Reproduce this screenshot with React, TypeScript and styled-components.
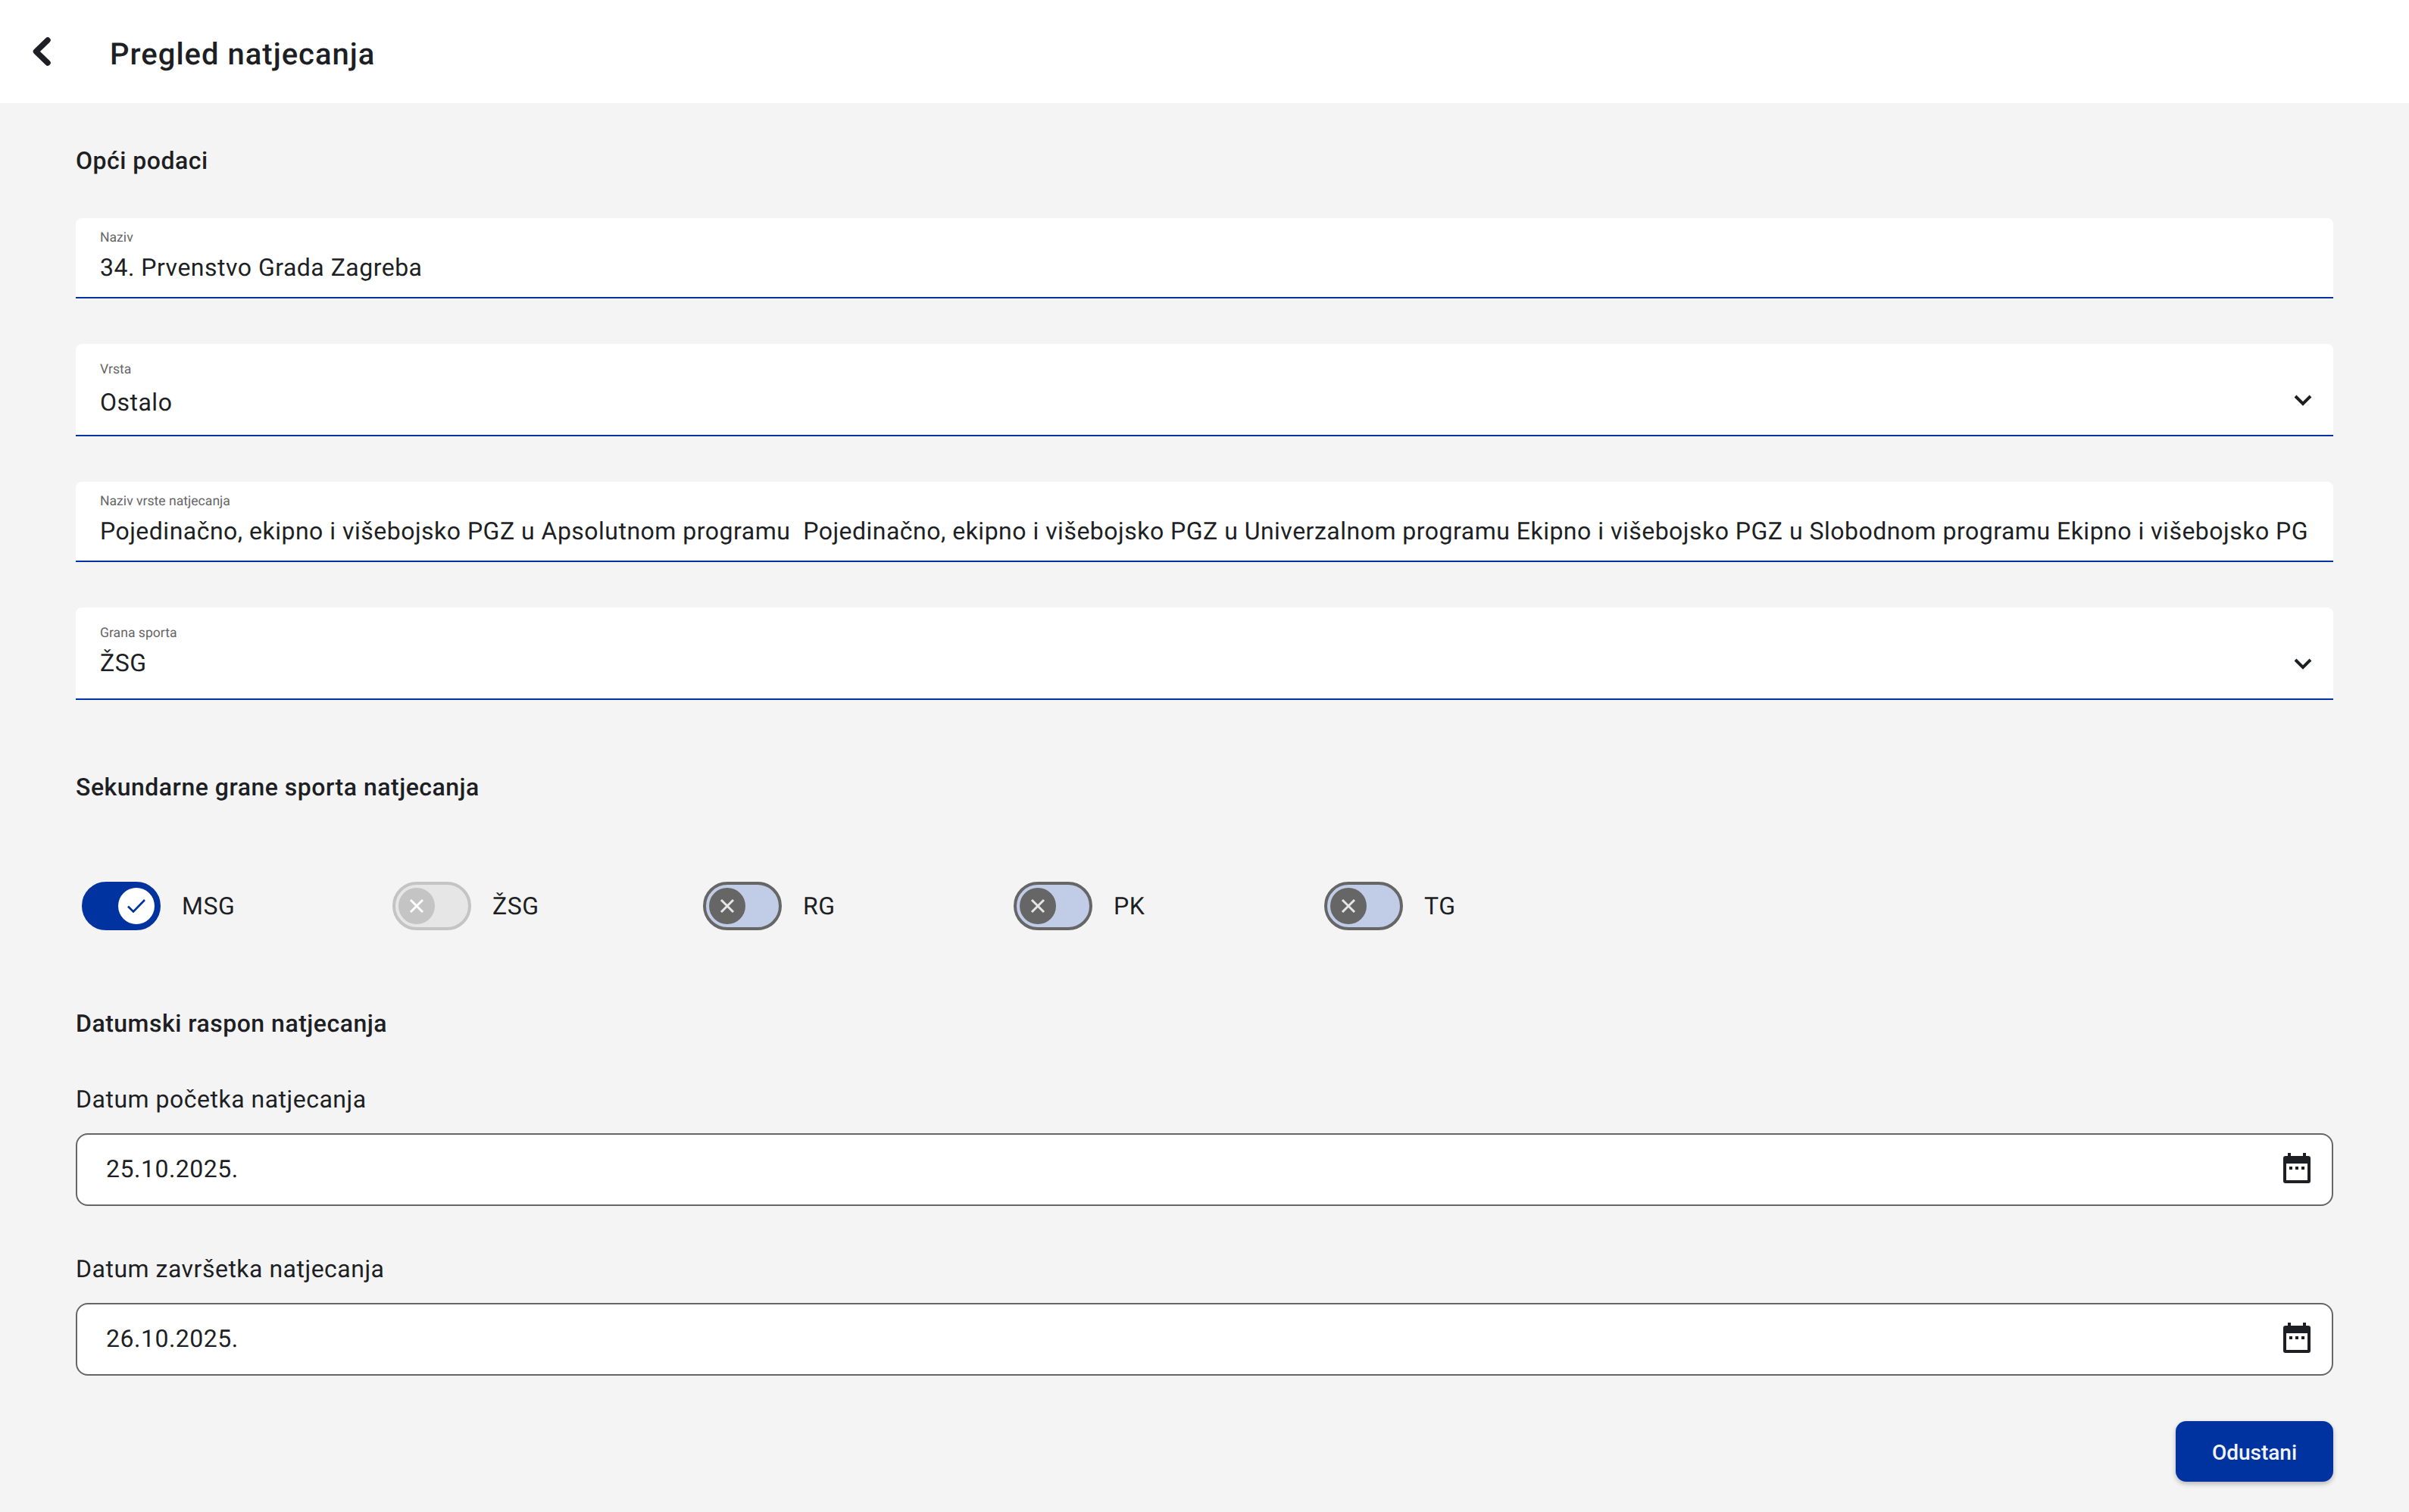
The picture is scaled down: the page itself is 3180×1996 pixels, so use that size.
import React from 'react'
import styled, { createGlobalStyle } from 'styled-components'

const BLUE = '#0033a0';
const INK = '#1d1f24';

const GlobalStyle = createGlobalStyle`
    html, body {
        margin: 0;
        padding: 0;
        background: #f4f4f4;
    }
    * {
        box-sizing: border-box;
    }
    body {
        font-family: Roboto, "Liberation Sans", sans-serif;
        color: ${INK};
        text-rendering: geometricPrecision;
    }
`;

const sports = [
    { name: 'MSG', state: 'on' },
    { name: 'ŽSG', state: 'disabled' },
    { name: 'RG', state: 'off' },
    { name: 'PK', state: 'off' },
    { name: 'TG', state: 'off' },
] as const;

const longName = 'Pojedinačno, ekipno i višebojsko PGZ u Apsolutnom programu  Pojedinačno, ekipno i višebojsko PGZ u Univerzalnom programu Ekipno i višebojsko PGZ u Slobodnom programu Ekipno i višebojsko PG';

const BackIcon = () => (
    <svg width="24" height="38" viewBox="0 0 24 38" fill="none">
        <path d="M20 4 L4.5 19 L20 34" stroke={INK} strokeWidth="7.5" strokeLinecap="round" strokeLinejoin="round" />
    </svg>
);

const ChevronIcon = () => (
    <svg width="24" height="16" viewBox="0 0 24 16" fill="none">
        <path d="M2 3 L12 13 L22 3" stroke={INK} strokeWidth="4" />
    </svg>
);

const CalendarIcon = () => (
    <svg width="36" height="40" viewBox="0 0 36 40">
        <path
            fillRule="evenodd"
            fill={INK}
            d="M6 0h4v4h16v-4h4v4h3a3 3 0 0 1 3 3v30a3 3 0 0 1-3 3h-30a3 3 0 0 1-3-3v-30a3 3 0 0 1 3-3h3zM4 14v22h28v-22z"
        />
        <rect x="8" y="18" width="4" height="4" fill={INK} />
        <rect x="16" y="18" width="4" height="4" fill={INK} />
        <rect x="24" y="18" width="4" height="4" fill={INK} />
    </svg>
);

const CheckIcon = () => (
    <svg width="24" height="18" viewBox="0 0 24 18" fill="none">
        <path d="M1 9.5 L8 16.5 L23 1" stroke={BLUE} strokeWidth="2.6" />
    </svg>
);

const CrossIcon = ({ color }: { color: string }) => (
    <svg width="20" height="20" viewBox="0 0 20 20" fill="none">
        <path d="M2 2 L18 18 M18 2 L2 18" stroke={color} strokeWidth="3" />
    </svg>
);

const App = () => {

    return (
        <>
            <GlobalStyle />
            <Header>
                <BackButton><BackIcon /></BackButton>
                <Title>Pregled natjecanja</Title>
            </Header>
            <Content>
                <SectionTitle>Opći podaci</SectionTitle>
                <FieldList>
                    <Field>
                        <FieldLabel>Naziv</FieldLabel>
                        <FieldValue>34. Prvenstvo Grada Zagreba</FieldValue>
                    </Field>
                    <Field select>
                        <FieldLabel>Vrsta</FieldLabel>
                        <FieldValue gap={11}>Ostalo</FieldValue>
                        <FieldChevron><ChevronIcon /></FieldChevron>
                    </Field>
                    <Field>
                        <FieldLabel>Naziv vrste natjecanja</FieldLabel>
                        <FieldValue>{longName}</FieldValue>
                    </Field>
                    <Field select>
                        <FieldLabel>Grana sporta</FieldLabel>
                        <FieldValue gap={7}>ŽSG</FieldValue>
                        <FieldChevron><ChevronIcon /></FieldChevron>
                    </Field>
                </FieldList>

                <SecondaryTitle>Sekundarne grane sporta natjecanja</SecondaryTitle>
                <SwitchRow>
                    {sports.map(({ name, state }) => (
                        <SwitchItem key={name}>
                            <Track state={state}>
                                <Thumb state={state}>
                                    {state === 'on' && <CheckIcon />}
                                    {state === 'disabled' && <CrossIcon color="#ffffff" />}
                                    {state === 'off' && <CrossIcon color="#e6e6e6" />}
                                </Thumb>
                            </Track>
                            <SwitchLabel>{name}</SwitchLabel>
                        </SwitchItem>
                    ))}
                </SwitchRow>

                <DateTitle>Datumski raspon natjecanja</DateTitle>
                <DateLabel>Datum početka natjecanja</DateLabel>
                <DateInput>
                    <DateValue>25.10.2025.</DateValue>
                    <CalendarSlot><CalendarIcon /></CalendarSlot>
                </DateInput>
                <DateLabel second>Datum završetka natjecanja</DateLabel>
                <DateInput>
                    <DateValue>26.10.2025.</DateValue>
                    <CalendarSlot><CalendarIcon /></CalendarSlot>
                </DateInput>

                <Actions>
                    <CancelButton>Odustani</CancelButton>
                </Actions>
            </Content>
        </>
    )

}
export default App;

const Header = styled.header`
    height: 136px;
    background: #fff;
    display: flex;
    align-items: center;
    padding-left: 43px;
`;

const BackButton = styled.div`
    display: flex;
    width: 102px;
`;

const Title = styled.h1`
    margin: 8px 0 0;
    font-size: 40px;
    line-height: 56px;
    font-weight: 500;
    letter-spacing: 1px;
`;

const Content = styled.main`
    padding: 56px 100px 40px;
`;

const SectionTitle = styled.h2`
    margin: 0;
    font-size: 32px;
    line-height: 40px;
    font-weight: 500;
    letter-spacing: 0.5px;
`;

const FieldList = styled.div`
    margin-top: 56px;
    display: flex;
    flex-direction: column;
    gap: 60px;
`;

interface FieldProps {
    select?: boolean;
}
const Field = styled.div<FieldProps>`
    position: relative;
    height: ${({ select }) => select ? 122 : 106}px;
    padding: ${({ select }) => select ? 24 : 16}px 32px 0 32px;
    background: #fff;
    border-radius: 8px 8px 0 0;
    border-bottom: 2px solid ${BLUE};
    overflow: hidden;
`;

const FieldLabel = styled.div`
    font-size: 17.6px;
    line-height: 20px;
    color: #666;
`;

interface FieldValueProps {
    gap?: number;
}
const FieldValue = styled.div<FieldValueProps>`
    margin-top: ${({ gap }) => gap ?? 7}px;
    font-size: 32px;
    line-height: 44px;
    letter-spacing: 0.49px;
    white-space: pre;
`;

const FieldChevron = styled.span`
    position: absolute;
    right: 28px;
    bottom: 38px;
    display: flex;
`;

const SecondaryTitle = styled(SectionTitle)`
    margin-top: 95px;
`;

const SwitchRow = styled.div`
    margin-top: 105px;
    padding-left: 8px;
    display: grid;
    grid-template-columns: repeat(5, 410px);
`;

const SwitchItem = styled.label`
    display: flex;
    align-items: center;
    gap: 28px;
`;

type SwitchState = 'on' | 'off' | 'disabled';

const trackColors = {
    on: { bg: BLUE, border: BLUE },
    off: { bg: '#c1cde6', border: '#666666' },
    disabled: { bg: '#e6e6e6', border: '#c4c4c4' },
};

const Track = styled.span<{ state: SwitchState }>`
    width: 104px;
    height: 64px;
    padding: 0 4px;
    border-radius: 32px;
    border: 4px solid ${({ state }) => trackColors[state].border};
    background: ${({ state }) => trackColors[state].bg};
    display: flex;
    align-items: center;
    justify-content: ${({ state }) => state === 'on' ? 'flex-end' : 'flex-start'};
`;

const Thumb = styled.span<{ state: SwitchState }>`
    width: 48px;
    height: 48px;
    border-radius: 50%;
    background: ${({ state }) => state === 'on' ? '#fff' : state === 'off' ? '#666666' : '#c4c4c4'};
    display: flex;
    align-items: center;
    justify-content: center;
`;

const SwitchLabel = styled.span`
    font-size: 32px;
    line-height: 44px;
    letter-spacing: 0.5px;
`;

const DateTitle = styled(SectionTitle)`
    margin-top: 103px;
`;

const DateLabel = styled.div<{ second?: boolean }>`
    margin-top: ${({ second }) => second ? 61 : 58}px;
    font-size: 32px;
    line-height: 44px;
    letter-spacing: 0.5px;
`;

const DateInput = styled.div`
    margin-top: 23px;
    height: 96px;
    padding: 0 28px 2px 38px;
    background: #fff;
    border: 2px solid #666;
    border-radius: 16px;
    display: flex;
    align-items: center;
    justify-content: space-between;
`;

const DateValue = styled.span`
    font-size: 32px;
    letter-spacing: 0.5px;
`;

const CalendarSlot = styled.span`
    display: flex;
    margin-bottom: 2px;
`;

const Actions = styled.div`
    margin-top: 60px;
    display: flex;
    justify-content: flex-end;
`;

const CancelButton = styled.button`
    width: 208px;
    height: 80px;
    padding: 2px 0 0;
    border: none;
    border-radius: 14px;
    background: ${BLUE};
    color: #f2f4fa;
    font-family: Roboto, "Liberation Sans", sans-serif;
    font-size: 28px;
    font-weight: 500;
    box-shadow: 0 3px 6px rgba(0, 0, 0, 0.25);
`;
